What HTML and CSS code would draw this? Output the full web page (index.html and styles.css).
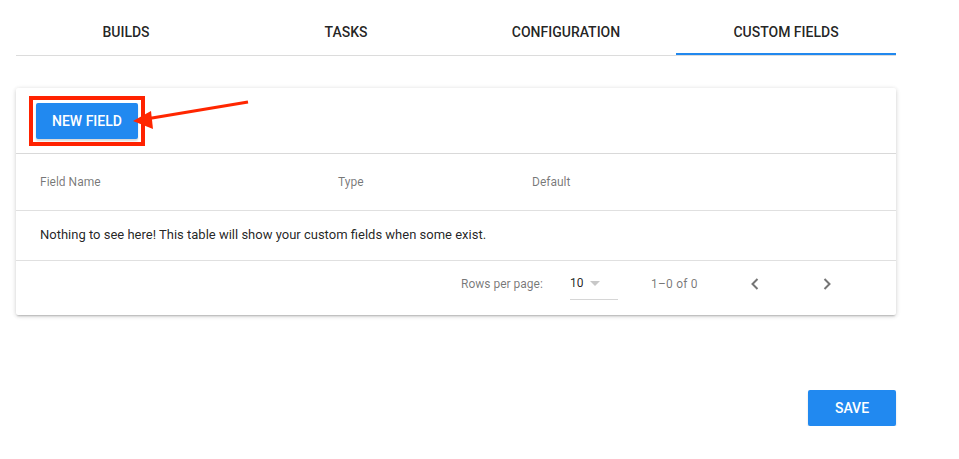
FILE: index.html
```html
<!DOCTYPE html>
<html>
<head>
<meta charset="utf-8">
<link rel="stylesheet" href="styles.css">
</head>
<body>
<div class="page">
  <nav class="tabs">
    <div class="tab">BUILDS</div>
    <div class="tab">TASKS</div>
    <div class="tab">CONFIGURATION</div>
    <div class="tab active">CUSTOM FIELDS</div>
  </nav>

  <section class="card">
    <div class="toolbar">
      <div class="btn-wrap">
        <button class="btn">NEW FIELD</button>
        <span class="highlight"></span>
      </div>
    </div>
    <div class="row head">
      <span>Field Name</span>
      <span>Type</span>
      <span>Default</span>
    </div>
    <div class="row empty">Nothing to see here! This table will show your custom fields when some exist.</div>
    <div class="footer">
      <span class="rpp">Rows per page:</span>
      <div class="select"><span>10</span><span class="caret"></span></div>
      <span class="range">1–0 of 0</span>
      <span class="nav-btn prev"><svg width="10" height="14" viewBox="0 0 10 14"><path d="M7.5 2 L2.5 7 L7.5 12" fill="none" stroke="#757575" stroke-width="2"/></svg></span>
      <span class="nav-btn next"><svg width="10" height="14" viewBox="0 0 10 14"><path d="M2.5 2 L7.5 7 L2.5 12" fill="none" stroke="#757575" stroke-width="2"/></svg></span>
    </div>
  </section>

  <div class="actions">
    <button class="btn save">SAVE</button>
  </div>
</div>

<svg class="arrow" width="959" height="459" viewBox="0 0 959 459">
  <line x1="248" y1="102" x2="146" y2="119" stroke="#ff2600" stroke-width="3.2"/>
  <polygon points="133,121 151,111 153,129" fill="#ff2600"/>
</svg>
</body>
</html>
```

FILE: styles.css
```css
html, body {
  margin: 0;
  padding: 0;
  background: #fff;
  font-family: Roboto, "Liberation Sans", sans-serif;
  color: rgba(0,0,0,0.87);
}
.page {
  width: 880px;
  padding: 7px 16px 0 16px;
}
.tabs {
  display: grid;
  grid-template-columns: repeat(4, 1fr);
  height: 48px;
  border-bottom: 1px solid #dcdcdc;
}
.tab {
  display: flex;
  align-items: center;
  justify-content: center;
  font-size: 14px;
  font-weight: 500;
  color: rgba(0,0,0,0.87);
  padding-top: 1px;
}
.tab.active {
  box-shadow: inset 0 -2px 0 #2188ee;
}
.card {
  margin-top: 32px;
  background: #fff;
  border-radius: 2px;
  box-shadow: 0 2px 2px -1px rgba(0,0,0,0.2), 0 1px 4px 0 rgba(0,0,0,0.14), 0 1px 6px 0 rgba(0,0,0,0.06);
}
.toolbar {
  height: 66px;
  padding: 15px 0 0 20px;
  box-sizing: border-box;
  border-bottom: 1px solid #d9d9d9;
}
.btn-wrap {
  position: relative;
  display: inline-block;
}
.btn {
  border: none;
  background: #2189f0;
  color: #fff;
  font-family: Roboto, "Liberation Sans", sans-serif;
  font-size: 14px;
  font-weight: 500;
  height: 36px;
  padding: 0 16px;
  border-radius: 2px;
  box-shadow: 0 2px 2px rgba(0,0,0,0.15);
  display: block;
}
.highlight {
  position: absolute;
  left: -7px;
  top: -7px;
  right: -7px;
  bottom: -7px;
  border: 4px solid #ff2200;
}
.row {
  display: grid;
  grid-template-columns: 298px 194px 1fr;
  padding-left: 24px;
  align-items: center;
  border-bottom: 1px solid #e0e0e0;
}
.row.head {
  height: 56px;
  font-size: 12px;
  color: rgba(0,0,0,0.54);
  font-weight: 400;
}
.row.empty {
  display: block;
  height: 49px;
  line-height: 47px;
  font-size: 13px;
  color: rgba(0,0,0,0.87);
}
.footer {
  height: 54px;
  box-sizing: border-box;
  padding-bottom: 9px;
  display: flex;
  align-items: center;
  font-size: 12px;
  color: rgba(0,0,0,0.54);
  padding-left: 445px;
  white-space: nowrap;
}
.footer > * {
  flex-shrink: 0;
}
.rpp {
  width: 81px;
}
.select {
  margin-left: 28px;
  width: 48px;
  height: 32px;
  box-sizing: border-box;
  border-bottom: 1px solid #d6d6d6;
  display: flex;
  align-items: center;
  font-size: 12px;
  color: rgba(0,0,0,0.87);
}
.caret {
  margin-left: 6px;
  width: 0;
  height: 0;
  border-left: 5px solid transparent;
  border-right: 5px solid transparent;
  border-top: 5px solid #c8c8c8;
}
.range {
  margin-left: 33px;
  width: 48px;
  font-size: 12px;
  color: rgba(0,0,0,0.54);
  letter-spacing: 0.2px;
}
.nav-btn {
  width: 36px;
  height: 36px;
  display: flex;
  align-items: center;
  justify-content: center;
}
.nav-btn.prev {
  margin-left: 38px;
}
.nav-btn.next {
  margin-left: 36px;
}
.actions {
  display: flex;
  justify-content: flex-end;
  margin-top: 75px;
}
.btn.save {
  width: 88px;
  padding: 0;
}
.arrow {
  position: absolute;
  left: 0;
  top: 0;
  pointer-events: none;
}
```
